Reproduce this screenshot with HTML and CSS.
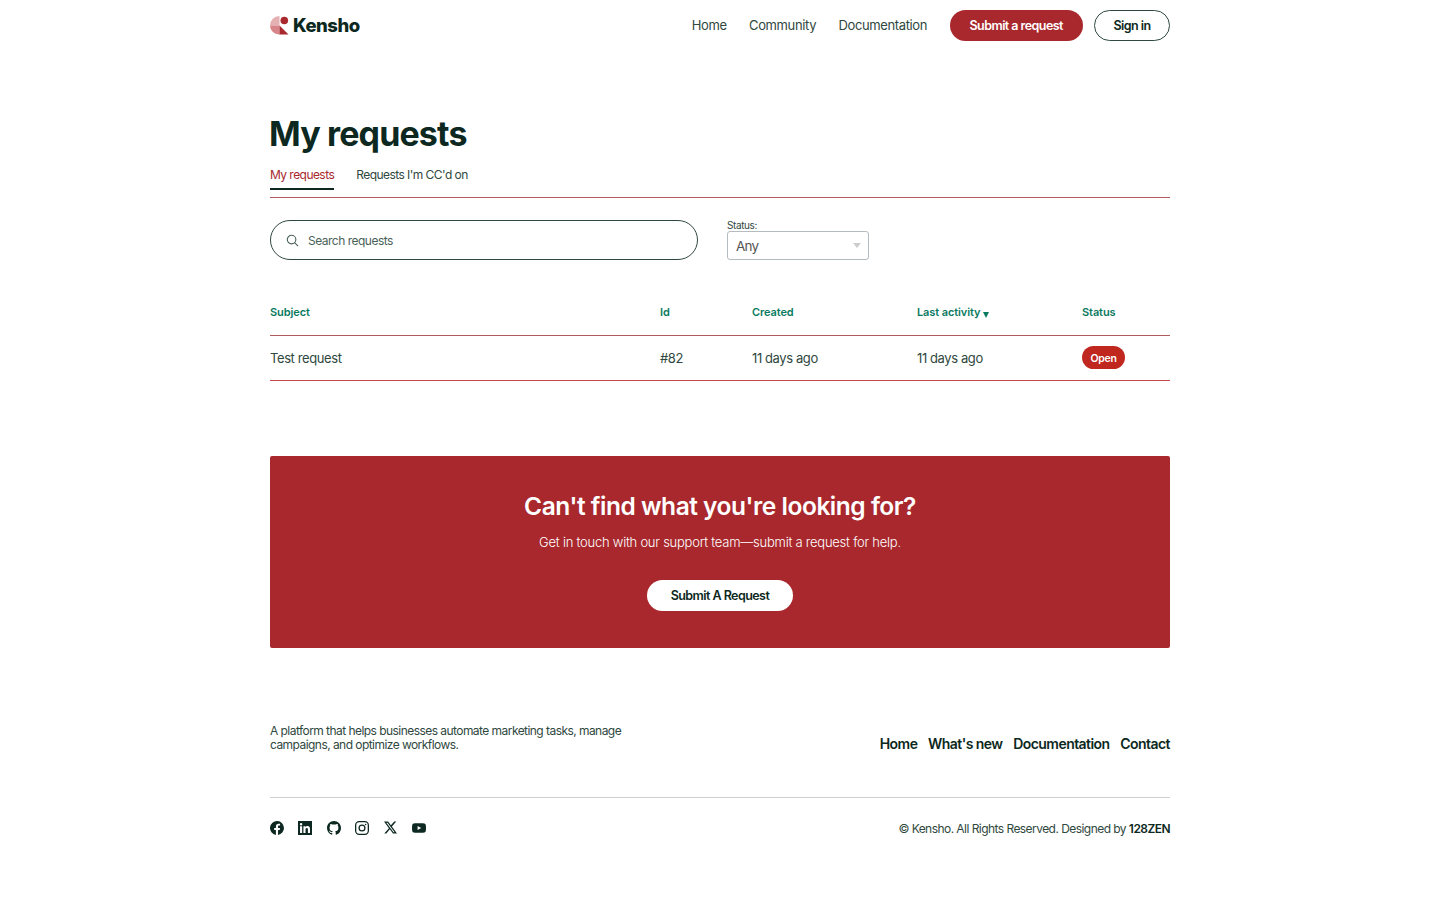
FILE: index.html
```html
<!DOCTYPE html>
<html lang="en">
<head>
    <meta charset="UTF-8">
    <meta name="viewport" content="width=device-width, initial-scale=1.0">
    <title>My requests</title>
    <link rel="stylesheet" href="styles.css">
</head>
<body>
    <div class="container">
        <!-- Header -->
        <header class="site-header">
            <a href="#" class="logo">
                <svg class="logo-mark" width="19" height="19" viewBox="0 0 19 19">
                    <path d="M9.500 0 A9.500 9.500 0 0 0 0 9.500 L9.500 9.500 Z" fill="#e4b0b1"/>
                    <path d="M0 9.500 A9 9 0 0 0 9.500 18.500 L9.500 9.500 Z" fill="#d8858a"/>
                    <path d="M9.500 9.500 L18.500 18.500 L9.500 18.500 Z" fill="#a9282d"/>
                    <circle cx="14.300" cy="4.500" r="3.800" fill="#a9282d"/>
                </svg>
                <span>Kensho</span>
            </a>
            <nav class="main-nav">
                <a href="#" class="nav-link">Home</a>
                <a href="#" class="nav-link">Community</a>
                <a href="#" class="nav-link">Documentation</a>
                <a href="#" class="btn-submit">Submit a request</a>
                <a href="#" class="btn-signin">Sign in</a>
            </nav>
        </header>

        <main>
            <h1 class="page-title">My requests</h1>

            <div class="tabs">
                <a href="#" class="tab active">My requests</a>
                <a href="#" class="tab">Requests I'm CC'd on</a>
            </div>

            <div class="filters">
                <div class="search-box">
                    <svg width="13" height="13" viewBox="0 0 14 14" fill="none" stroke="#4a5f58" stroke-width="1.200">
                        <circle cx="6" cy="6" r="4.600"/>
                        <path d="M9.500 9.500 L13 13"/>
                    </svg>
                    <span>Search requests</span>
                </div>
                <div class="status-filter">
                    <label>Status:</label>
                    <div class="select-box">
                        <span>Any</span>
                        <i class="caret"></i>
                    </div>
                </div>
            </div>

            <table class="requests-table">
                <thead>
                    <tr>
                        <th class="col-subject">Subject</th>
                        <th class="col-id">Id</th>
                        <th class="col-created">Created</th>
                        <th class="col-activity">Last activity <i class="sort-arrow"></i></th>
                        <th>Status</th>
                    </tr>
                </thead>
                <tbody>
                    <tr>
                        <td>Test request</td>
                        <td>#82</td>
                        <td>11 days ago</td>
                        <td>11 days ago</td>
                        <td><span class="badge-open">Open</span></td>
                    </tr>
                </tbody>
            </table>

            <!-- Call to action -->
            <section class="cta">
                <h2>Can't find what you're looking for?</h2>
                <p>Get in touch with our support team—submit a request for help.</p>
                <a href="#" class="btn-cta">Submit A Request</a>
            </section>
        </main>

        <!-- Footer -->
        <footer class="site-footer">
            <div class="footer-top">
                <p class="footer-about">A platform that helps businesses automate marketing tasks, manage campaigns, and optimize workflows.</p>
                <nav class="footer-nav">
                    <a href="#">Home</a>
                    <a href="#">What's new</a>
                    <a href="#">Documentation</a>
                    <a href="#">Contact</a>
                </nav>
            </div>
            <div class="footer-bottom">
                <div class="social">
                    <svg viewBox="0 0 24 24" width="14" height="14"><path d="M24 12a12 12 0 1 0-13.900 11.900v-8.400H7.100V12h3V9.400c0-3 1.800-4.700 4.500-4.700 1.300 0 2.700.2 2.700.2v3h-1.500c-1.500 0-2 .9-2 1.900V12h3.400l-.5 3.500h-2.900v8.400A12 12 0 0 0 24 12z"/></svg>
                    <svg viewBox="0 0 24 24" width="14" height="14"><path d="M0 0h24v24H0z M3.500 9v11.500h3.600V9z M5.300 3.500a2.100 2.100 0 1 0 0 4.200 2.100 2.100 0 0 0 0-4.200z M9.300 9v11.500h3.600v-5.700c0-1.500.3-3 2.200-3s1.900 1.700 1.900 3.100v5.600h3.600v-6.300c0-3.100-.7-5.500-4.300-5.500-1.700 0-2.900.9-3.400 1.800V9z" fill-rule="evenodd"/></svg>
                    <svg viewBox="0 0 24 24" width="14" height="14"><path d="M12 0C5.400 0 0 5.400 0 12c0 5.300 3.400 9.800 8.200 11.400.6.100.8-.3.800-.6v-2.200c-3.300.7-4-1.400-4-1.400-.5-1.400-1.300-1.800-1.300-1.800-1.100-.7.1-.7.1-.7 1.200.1 1.800 1.200 1.800 1.200 1.100 1.800 2.800 1.300 3.500 1 .1-.8.4-1.300.8-1.600-2.700-.3-5.500-1.300-5.500-5.900 0-1.300.5-2.400 1.200-3.200-.1-.3-.5-1.500.1-3.200 0 0 1-.3 3.300 1.200a11.500 11.500 0 0 1 6 0c2.300-1.500 3.300-1.200 3.300-1.200.7 1.700.2 2.900.1 3.200.8.800 1.200 1.900 1.200 3.200 0 4.600-2.800 5.600-5.500 5.900.4.400.8 1.100.8 2.200v3.300c0 .3.200.7.800.6A12 12 0 0 0 24 12c0-6.600-5.400-12-12-12z"/></svg>
                    <svg viewBox="0 0 24 24" width="14" height="14" fill="none" stroke="#0c2820" stroke-width="2.200"><rect x="1.100" y="1.100" width="21.800" height="21.800" rx="6"/><circle cx="12" cy="12" r="5"/><circle cx="18.200" cy="5.800" r="1.300" fill="#0c2820" stroke="none"/></svg>
                    <svg viewBox="0 0 24 24" width="13" height="13" class="icon-x"><path d="M18.900 1h3.700l-8 9.200L24 23h-7.400l-5.800-7.600L4.200 23H.5l8.600-9.800L0 1h7.600l5.200 6.900zm-1.300 19.800h2L6.500 3.100H4.300z"/></svg>
                    <svg viewBox="0 0 24 24" width="14" height="14"><path d="M23.500 6.500a3 3 0 0 0-2.100-2.100C19.500 3.900 12 3.900 12 3.900s-7.500 0-9.400.5A3 3 0 0 0 .5 6.500 31 31 0 0 0 0 12c0 1.900.2 3.700.5 5.500a3 3 0 0 0 2.100 2.100c1.900.5 9.400.5 9.400.5s7.500 0 9.400-.5a3 3 0 0 0 2.100-2.100c.3-1.800.5-3.600.5-5.500s-.2-3.700-.5-5.500zM9.600 15.600V8.400l6.200 3.600z"/></svg>
                </div>
                <p class="copyright">© Kensho. All Rights Reserved. Designed by <strong>128ZEN</strong></p>
            </div>
        </footer>
    </div>
</body>
</html>
```

FILE: styles.css
```css
* {
    box-sizing: border-box;
}

body {
    font-family: Inter, "Liberation Sans", sans-serif;
    color: #0c2820;
    background-color: #fff;
    margin: 0;
    padding: 0;
}

a {
    color: inherit;
    text-decoration: none;
}

.container {
    width: 900px;
    margin: 0 auto;
}

.site-header {
    display: flex;
    justify-content: space-between;
    align-items: center;
    height: 50px;
    padding-top: 1px;
}

.logo {
    display: flex;
    align-items: center;
    gap: 4px;
    font-size: 18.500px;
    font-weight: 800;
    letter-spacing: -0.500px;
    padding-bottom: 1px;
}

.main-nav {
    display: flex;
    align-items: center;
    gap: 22.400px;
    font-size: 13px;
    letter-spacing: -0.370px;
    color: #2f4840;
}

.nav-link {
    padding-bottom: 2px;
}

.btn-submit {
    background-color: #a9282d;
    color: #fff;
    font-size: 12.500px;
    font-weight: 600;
    letter-spacing: -0.550px;
    height: 31px;
    line-height: 31px;
    padding: 0 20px;
    border-radius: 16px;
}

.btn-signin {
    color: #0c2820;
    font-size: 12.500px;
    font-weight: 600;
    letter-spacing: -0.550px;
    height: 31px;
    line-height: 29px;
    padding: 0 18.500px;
    border: 1px solid #2f4840;
    border-radius: 16px;
    margin-left: -11.400px;
}

.page-title {
    font-size: 34px;
    font-weight: 700;
    letter-spacing: -0.850px;
    line-height: 43px;
    margin: 62px 0 0 -1px;
}

.tabs {
    display: flex;
    gap: 22px;
    margin-top: 12px;
    border-bottom: 1px solid #b25a5e;
    padding-bottom: 7px;
    font-size: 12px;
    letter-spacing: -0.550px;
    color: #2f4840;
}

.tab {
    display: block;
    line-height: 16px;
    padding-bottom: 5px;
    border-bottom: 2px solid transparent;
}

.tab.active {
    color: #a9282d;
    border-bottom-color: #0c2820;
}

.filters {
    display: flex;
    align-items: flex-end;
    gap: 29px;
    margin-top: 22px;
}

.search-box {
    display: flex;
    align-items: center;
    gap: 9px;
    width: 428px;
    height: 40px;
    padding-left: 15px;
    border: 1px solid #2f4840;
    border-radius: 20px;
    font-size: 12px;
    letter-spacing: -0.500px;
    color: #4a5f58;
}

.status-filter label {
    display: block;
    font-size: 10px;
    line-height: 11px;
    letter-spacing: -0.400px;
    color: #2f4840;
}

.select-box {
    display: flex;
    justify-content: space-between;
    align-items: center;
    width: 142px;
    height: 29px;
    padding: 0 7px 0 8px;
    border: 1px solid #b4bcc0;
    border-radius: 3px;
    font-size: 13.500px;
    letter-spacing: -0.800px;
    color: #555;
}

.caret {
    border-left: 4px solid transparent;
    border-right: 4px solid transparent;
    border-top: 5px solid #ccc;
}

.requests-table {
    width: 100%;
    border-collapse: collapse;
    margin-top: 29px;
    table-layout: fixed;
}

.requests-table th {
    text-align: left;
    font-size: 11px;
    font-weight: 600;
    letter-spacing: -0.100px;
    color: #0a7a5f;
    height: 46px;
    padding: 0;
    border-bottom: 1px solid #b25a5e;
}

.requests-table td {
    font-size: 13px;
    letter-spacing: -0.400px;
    color: #2f4840;
    height: 45px;
    padding: 0;
    border-bottom: 1px solid #c0494e;
}

.col-subject { width: 390px; }
.col-id { width: 92px; }
.col-created { width: 165px; }
.col-activity { width: 165px; }

.sort-arrow {
    display: inline-block;
    border-left: 3.500px solid transparent;
    border-right: 3.500px solid transparent;
    border-top: 6px solid #0a7a5f;
    vertical-align: -2px;
}

.badge-open {
    display: inline-block;
    background-color: #c0271f;
    color: #fff;
    font-size: 10.500px;
    font-weight: 600;
    letter-spacing: -0.300px;
    line-height: 21px;
    padding: 2px 8.500px 0;
    border-radius: 12px;
}

.cta {
    margin-top: 75px;
    height: 192px;
    padding-top: 33px;
    background-color: #a9282d;
    border-radius: 2px;
    color: #fff;
    text-align: center;
}

.cta h2 {
    font-size: 24.500px;
    font-weight: 600;
    letter-spacing: -0.470px;
    line-height: 34px;
    margin: 0;
}

.cta p {
    font-size: 13px;
    font-weight: 300;
    letter-spacing: -0.240px;
    line-height: 20px;
    margin: 9px 0 0;
}

.btn-cta {
    display: inline-block;
    margin-top: 28px;
    background-color: #fff;
    color: #0c2820;
    font-size: 12.500px;
    font-weight: 600;
    letter-spacing: -0.550px;
    line-height: 31px;
    width: 146px;
    border-radius: 16px;
}

.footer-top {
    display: flex;
    justify-content: space-between;
    align-items: flex-end;
    margin-top: 75px;
    height: 75px;
    border-bottom: 1px solid #cfcfcf;
    padding-bottom: 45px;
}

.footer-about {
    width: 370px;
    font-size: 12px;
    letter-spacing: -0.550px;
    line-height: 14px;
    margin: 0;
    color: #2f4840;
}

.footer-nav {
    display: flex;
    gap: 10.700px;
    font-size: 14px;
    font-weight: 600;
    letter-spacing: -0.550px;
}

.footer-bottom {
    display: flex;
    justify-content: space-between;
    align-items: center;
    margin-top: 23px;
}

.social {
    display: flex;
    align-items: center;
    gap: 14.400px;
    fill: #0c2820;
    padding-bottom: 2px;
}

.icon-x {
    margin: 0 0.500px;
}

.copyright {
    font-size: 12px;
    letter-spacing: -0.550px;
    margin: 0;
    color: #2f4840;
}

.copyright strong {
    color: #0c2820;
    font-weight: 600;
}
```
